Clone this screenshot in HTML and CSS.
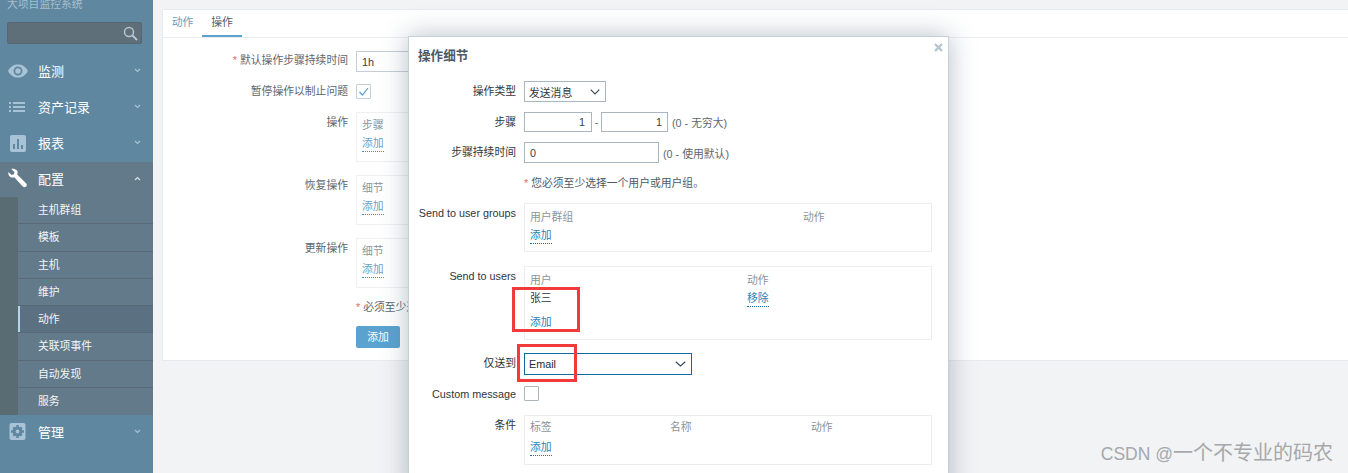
FILE: index.html
```html
<!DOCTYPE html>
<html>
<head>
<meta charset="utf-8">
<title>操作细节</title>
<link rel="stylesheet" href="styles.css">
</head>
<body>
<div class="sidebar">
	<div class="sidebar-title">大项目监控系统</div>
	<div class="sidebar-search">
		<svg width="15" height="15" viewBox="0 0 15 15"><circle cx="6" cy="6" r="4.5" fill="none" stroke="#b4c6d2" stroke-width="1.5"/><path d="M9.5 9.5L14 14" stroke="#b4c6d2" stroke-width="2"/></svg>
	</div>
	<div class="menu-row">
		<svg class="menu-icon" width="20" height="20" viewBox="0 0 20 20"><path fill-rule="evenodd" fill="#a8c3d5" d="M0 10C2.500 5.300 6 3.500 10 3.500S17.500 5.300 20 10C17.500 14.700 14 16.500 10 16.500S2.500 14.700 0 10ZM10 5.500A4.500 4.500 0 1 0 10 14.500A4.500 4.500 0 1 0 10 5.500Z"/><circle cx="10" cy="10" r="2.700" fill="#a8c3d5"/></svg>
		<span class="menu-name">监测</span>
		<svg class="menu-arrow" width="7" height="5" viewBox="0 0 7 5"><path d="M1 1L3.500 3.500L6 1" fill="none" stroke="#a8c3d5" stroke-width="1.200"/></svg>
	</div>
	<div class="menu-row">
		<svg class="menu-icon" width="20" height="20" viewBox="0 0 20 20"><path fill="#a8c3d5" d="M1 5h2v2H1zM5 5h12v2H5zM1 9h2v2H1zM5 9h12v2H5zM1 13h2v2H1zM5 13h12v2H5z"/></svg>
		<span class="menu-name">资产记录</span>
		<svg class="menu-arrow" width="7" height="5" viewBox="0 0 7 5"><path d="M1 1L3.500 3.500L6 1" fill="none" stroke="#a8c3d5" stroke-width="1.200"/></svg>
	</div>
	<div class="menu-row">
		<svg class="menu-icon" width="20" height="20" viewBox="0 0 20 20"><rect x="2" y="2" width="16" height="17" rx="2" fill="#a8c3d5"/><path fill="#5f87a0" d="M5 11h2v5H5zM9 6h2v10H9zM13 12h2v4h-2z"/></svg>
		<span class="menu-name">报表</span>
		<svg class="menu-arrow" width="7" height="5" viewBox="0 0 7 5"><path d="M1 1L3.500 3.500L6 1" fill="none" stroke="#a8c3d5" stroke-width="1.200"/></svg>
	</div>
	<div class="menu-row menu-row-open">
		<svg class="menu-icon" width="20" height="20" viewBox="0 0 20 20"><path fill="#fff" d="M9 2.500C7 .5 4.300 .4 3.300 1L6.500 4.200L5.800 6.300L3.500 7L.5 3.900C.1 5.500 .5 7.500 2 8.700C3.300 9.800 5 9.800 6.300 9.300L14.800 18.500C15.800 19.500 17.300 19.500 18.200 18.600C19.100 17.700 19 16.200 18 15.300L9.200 6.500C9.700 5.200 9.900 3.500 9 2.500Z"/></svg>
		<span class="menu-name">配置</span>
		<svg class="menu-arrow" width="7" height="5" viewBox="0 0 7 5"><path d="M1 4L3.500 1.500L6 4" fill="none" stroke="#d5e0e7" stroke-width="1.200"/></svg>
	</div>
	<div class="submenu">
		<div class="submenu-row">主机群组</div>
		<div class="submenu-row">模板</div>
		<div class="submenu-row">主机</div>
		<div class="submenu-row">维护</div>
		<div class="submenu-row submenu-row-on">动作</div>
		<div class="submenu-row">关联项事件</div>
		<div class="submenu-row">自动发现</div>
		<div class="submenu-row">服务</div>
	</div>
	<div class="menu-row">
		<svg class="menu-icon" width="20" height="20" viewBox="0 0 20 20"><rect x="1.500" y="1" width="16" height="17" rx="2" fill="#a8c3d5"/><g fill="#5f87a0"><circle cx="9.500" cy="9.500" r="4.800"/><path d="M8.300 3h2.400v13H8.300zM3 8.300h13v2.400H3z"/><path d="M4.500 6.200L6.200 4.500L14.500 12.800L12.800 14.500zM12.800 4.500L14.500 6.200L6.200 14.500L4.500 12.800z"/></g><circle cx="9.500" cy="9.500" r="1.900" fill="#a8c3d5"/></svg>
		<span class="menu-name">管理</span>
		<svg class="menu-arrow" width="7" height="5" viewBox="0 0 7 5"><path d="M1 1L3.500 3.500L6 1" fill="none" stroke="#a8c3d5" stroke-width="1.200"/></svg>
	</div>
</div>

<div class="main">
	<div class="card">
		<div class="tabs">
			<div class="tab tab-first">动作</div>
			<div class="tab tab-on">操作</div>
		</div>
		<div class="page-form">
			<div class="page-label"><span class="req">*</span> 默认操作步骤持续时间</div>
			<div><input class="text-input page-input" type="text" value="1h"></div>
			<div class="page-label page-label-check">暂停操作以制止问题</div>
			<div class="checkbox">
				<svg width="13" height="13" viewBox="0 0 13 13"><path d="M2.500 7L5.500 10L11 3" fill="none" stroke="#5b9fc9" stroke-width="1.200"/></svg>
			</div>
			<div class="page-label page-label-box">操作</div>
			<div class="page-box"><div class="box-head">步骤</div><a class="link-add">添加</a></div>
			<div class="page-label page-label-box">恢复操作</div>
			<div class="page-box"><div class="box-head">细节</div><a class="link-add">添加</a></div>
			<div class="page-label page-label-box">更新操作</div>
			<div class="page-box"><div class="box-head">细节</div><a class="link-add">添加</a></div>
			<div></div>
			<div class="page-note"><span class="req">*</span> 必须至少选择一个操作</div>
			<div></div>
			<div><div class="btn">添加</div></div>
		</div>
	</div>
</div>

<div class="modal">
	<svg class="modal-close" width="9" height="9" viewBox="0 0 9 9"><path d="M1 1L8 8M8 1L1 8" stroke="#b5c4cd" stroke-width="2.400"/></svg>
	<div class="modal-title">操作细节</div>
	<div class="modal-form">
		<div class="modal-label">操作类型</div>
		<div class="field-row">
			<div class="select select-type">发送消息
				<svg width="10" height="6" viewBox="0 0 10 6"><path d="M.7 .7L5 5L9.300 .7" fill="none" stroke="#3c4a52" stroke-width="1.200"/></svg>
			</div>
		</div>
		<div class="modal-label">步骤</div>
		<div class="field-row field-row-step">
			<input class="text-input step-input" type="text" value="1">
			<span class="dash">-</span>
			<input class="text-input step-input step-input-to" type="text" value="1">
			<span class="hint">(0 - 无穷大)</span>
		</div>
		<div class="modal-label">步骤持续时间</div>
		<div class="field-row">
			<input class="text-input delay-input" type="text" value="0">
			<span class="hint">(0 - 使用默认)</span>
		</div>
		<div></div>
		<div class="modal-note"><span class="req">*</span> 您必须至少选择一个用户或用户组。</div>

		<div class="modal-label">Send to user groups</div>
		<div class="list-box list-groups">
			<div class="list-grid grid-groups"><div class="box-head">用户群组</div><div class="box-head">动作</div></div>
			<a class="link-add link-dark">添加</a>
		</div>

		<div class="modal-label">Send to users</div>
		<div class="list-box list-users">
			<div class="list-grid grid-users"><div class="box-head">用户</div><div class="box-head">动作</div></div>
			<div class="list-grid grid-users user-row"><div class="user-name">张三</div><div><a class="link-add link-dark">移除</a></div></div>
			<a class="link-add link-dark user-add">添加</a>
		</div>

		<div class="modal-label">仅送到</div>
		<div class="field-row">
			<div class="select select-media">Email
				<svg width="11" height="6" viewBox="0 0 11 6"><path d="M.7 .7L5.500 5L10.300 .7" fill="none" stroke="#3c4a52" stroke-width="1.200"/></svg>
			</div>
		</div>

		<div class="modal-label">Custom message</div>
		<div class="field-row field-row-check"><div class="checkbox checkbox-plain"></div></div>

		<div class="modal-label">条件</div>
		<div class="list-box list-cond">
			<div class="list-grid grid-cond"><div class="box-head">标签</div><div class="box-head">名称</div><div class="box-head">动作</div></div>
			<a class="link-add link-dark">添加</a>
		</div>
	</div>
</div>

<div class="mark mark-user"></div>
<div class="mark mark-media"></div>
<div class="watermark"><span class="watermark-name">CSDN @</span>一个不专业的码农</div>
</body>
</html>
```

FILE: styles.css
```css
html, body { margin: 0; height: 473px; overflow: hidden; }
body {
	position: relative;
	display: flex;
	background-color: #f2f3f5;
	font: 10.8px "Liberation Sans", "Noto Sans CJK SC", sans-serif;
	color: #384048;
}

/* sidebar */
.sidebar { width: 153px; height: 473px; flex: none; background-color: #5f87a0; overflow: hidden; }
.sidebar-title { height: 22px; margin-top: -3px; padding-left: 7px; line-height: 15px; color: #a9bfce; }
.sidebar-search {
	display: flex;
	align-items: center;
	justify-content: flex-end;
	box-sizing: border-box;
	width: 135px;
	height: 22px;
	margin: 3px 0 10px 7px;
	padding-right: 3px;
	background-color: #5f6f79;
	border: 1px solid #566672;
	border-radius: 2px;
}
.menu-row { display: flex; align-items: center; box-sizing: border-box; height: 36px; padding: 0 0 3px 8px; color: #fff; }
.menu-row-open { height: 35px; background-color: #627a8a; }
.menu-name { flex: 1; margin-left: 10px; font-size: 13px; }
.menu-arrow { margin-right: 12px; }
.submenu { margin-left: 18px; box-shadow: -18px 0 0 #596c74; background-color: #627a8a; }
.submenu-row {
	box-sizing: border-box;
	height: 27.3px;
	padding-left: 20px;
	line-height: 27px;
	color: #f2f6f8;
	border-bottom: 1px solid #596a76;
}
.submenu-row:last-child { border-bottom: 0; }
.submenu-row-on { background-color: #5b7081; box-shadow: inset 2px 0 0 #b0d6f2; }

/* page behind the popup */
.main { flex: 1; padding: 9px 0 0 9px; }
.card { height: 350px; background-color: #fff; border: 1px solid #e8ebee; border-right: 0; }
.tabs { display: flex; height: 27px; border-bottom: 1px solid #ebeef0; }
.tab { width: 40px; line-height: 24px; text-align: center; color: #6d9bbb; }
.tab-first { width: 39px; }
.tab-on { height: 27px; box-sizing: border-box; color: #50606c; border-bottom: 2px solid #5ba2cf; }
.page-form {
	display: grid;
	grid-template-columns: 185px 400px;
	column-gap: 8px;
	row-gap: 13px;
	padding-top: 13px;
}
.page-label { text-align: right; line-height: 18px; color: #5d666e; }
.page-label-check { height: 15px; line-height: 15px; }
.page-label-box { line-height: 20px; }
.req { color: #e06a6a; }
.text-input {
	box-sizing: border-box;
	height: 21px;
	padding: 0 5px;
	font: 10.8px "Liberation Sans", "Noto Sans CJK SC", sans-serif;
	color: #384048;
	background-color: #fff;
	border: 1px solid #a9b6bf;
	outline: 0;
}
.page-input { display: block; width: 200px; margin-bottom: -1px; border-color: #c3ced6; }
.checkbox {
	display: flex;
	align-items: center;
	justify-content: center;
	box-sizing: border-box;
	width: 15px;
	height: 15px;
	border: 1px solid #c3ced6;
	border-radius: 1px;
}
.page-box { box-sizing: border-box; height: 50px; padding: 2px 5px; border: 1px solid #eef0f2; }
.page-box .box-head { line-height: 20px; }
.box-head { line-height: 18px; color: #8a949c; }
.link-add {
	display: inline-block;
	line-height: 15px;
	color: #6a9fc4;
	border-bottom: 1px dotted #3d8fc6;
}
.page-box .link-add { margin-top: 1px; }
.page-note { line-height: 12px; color: #5d666e; white-space: nowrap; }
.btn {
	width: 44px;
	height: 22px;
	line-height: 22px;
	text-align: center;
	color: #fff;
	background-color: #5ba2cf;
	border-radius: 2px;
}

/* popup */
.modal {
	position: absolute;
	left: 408px;
	top: 36px;
	box-sizing: border-box;
	width: 541px;
	height: 460px;
	background-color: #fff;
	border: 1px solid #c5d0d8;
	border-width: 1px 1px 0 1px;
	box-shadow: 0 0 25px rgba(70, 95, 115, .4);
}
.modal-close { position: absolute; right: 5px; top: 6px; }
.modal-title { height: 44px; padding: 10px 0 0 9px; box-sizing: border-box; font-size: 12.6px; line-height: 18px; font-weight: bold; color: #4d5a63; }
.modal-form {
	display: grid;
	grid-template-columns: 107px 408px;
	column-gap: 8px;
	row-gap: 10px;
}
.modal-label { text-align: right; line-height: 20px; color: #2f363c; white-space: nowrap; }
.field-row { display: flex; align-items: center; height: 21px; }
.field-row-step { height: 20px; }
.field-row-step .text-input { height: 20px; }
.field-row-check { align-items: flex-start; padding-top: 2px; box-sizing: border-box; }
.select {
	display: flex;
	align-items: center;
	justify-content: space-between;
	box-sizing: border-box;
	height: 21px;
	padding: 0 5px 0 4px;
	color: #2f363c;
	background-color: #fff;
	border: 1px solid #a9b6bf;
}
.select-type { width: 82px; }
.select-media { width: 168px; height: 22px; color: #1d2a33; border-color: #0f6a9a; }
.step-input { width: 68px; text-align: right; padding-right: 6px; }
.step-input-to { width: 67px; padding-right: 5px; }
.dash { width: 9px; text-align: center; color: #5d666e; }
.delay-input { width: 135px; }
.hint { margin-left: 4px; color: #5d666e; white-space: nowrap; }
.modal-note { line-height: 20px; color: #4d5a63; }
.list-box { box-sizing: border-box; padding: 3px 5px; border: 1px solid #ebedef; }
.list-groups { height: 49px; margin-bottom: 4px; padding-top: 4px; }
.list-users { height: 74px; margin-bottom: 3px; padding-top: 4px; }
.list-cond { height: 50px; padding-top: 2px; }
.list-grid { display: grid; }
.grid-groups { grid-template-columns: 273px 1fr; }
.grid-users { grid-template-columns: 217px 1fr; }
.grid-cond { grid-template-columns: 140px 141px 1fr; }
.link-dark { color: #2f7fb5; margin-top: 3px; border-color: #1c6fa8; }
.list-groups .link-dark { margin-top: 2px; }
.list-cond .link-dark { margin-top: 4px; }
.user-row { height: 18px; line-height: 18px; }
.user-row .link-add { margin-top: 0; }
.user-name { color: #2f363c; }
.user-add { margin-top: 8px; border-bottom: 0; }
.checkbox-plain { border-color: #a9b6bf; }

/* red boxes drawn on the screenshot */
.mark { position: absolute; box-sizing: border-box; border: 3px solid #f23a3a; }
.mark-user { left: 512px; top: 287px; width: 68px; height: 45px; }
.mark-media { left: 517px; top: 344px; width: 60px; height: 38px; }

.watermark {
	position: absolute;
	right: 15px;
	top: 441px;
	font-size: 20px;
	line-height: 24px;
	color: #a6a8aa;
	white-space: nowrap;
}
.watermark-name { font-size: 17.5px; }
```
